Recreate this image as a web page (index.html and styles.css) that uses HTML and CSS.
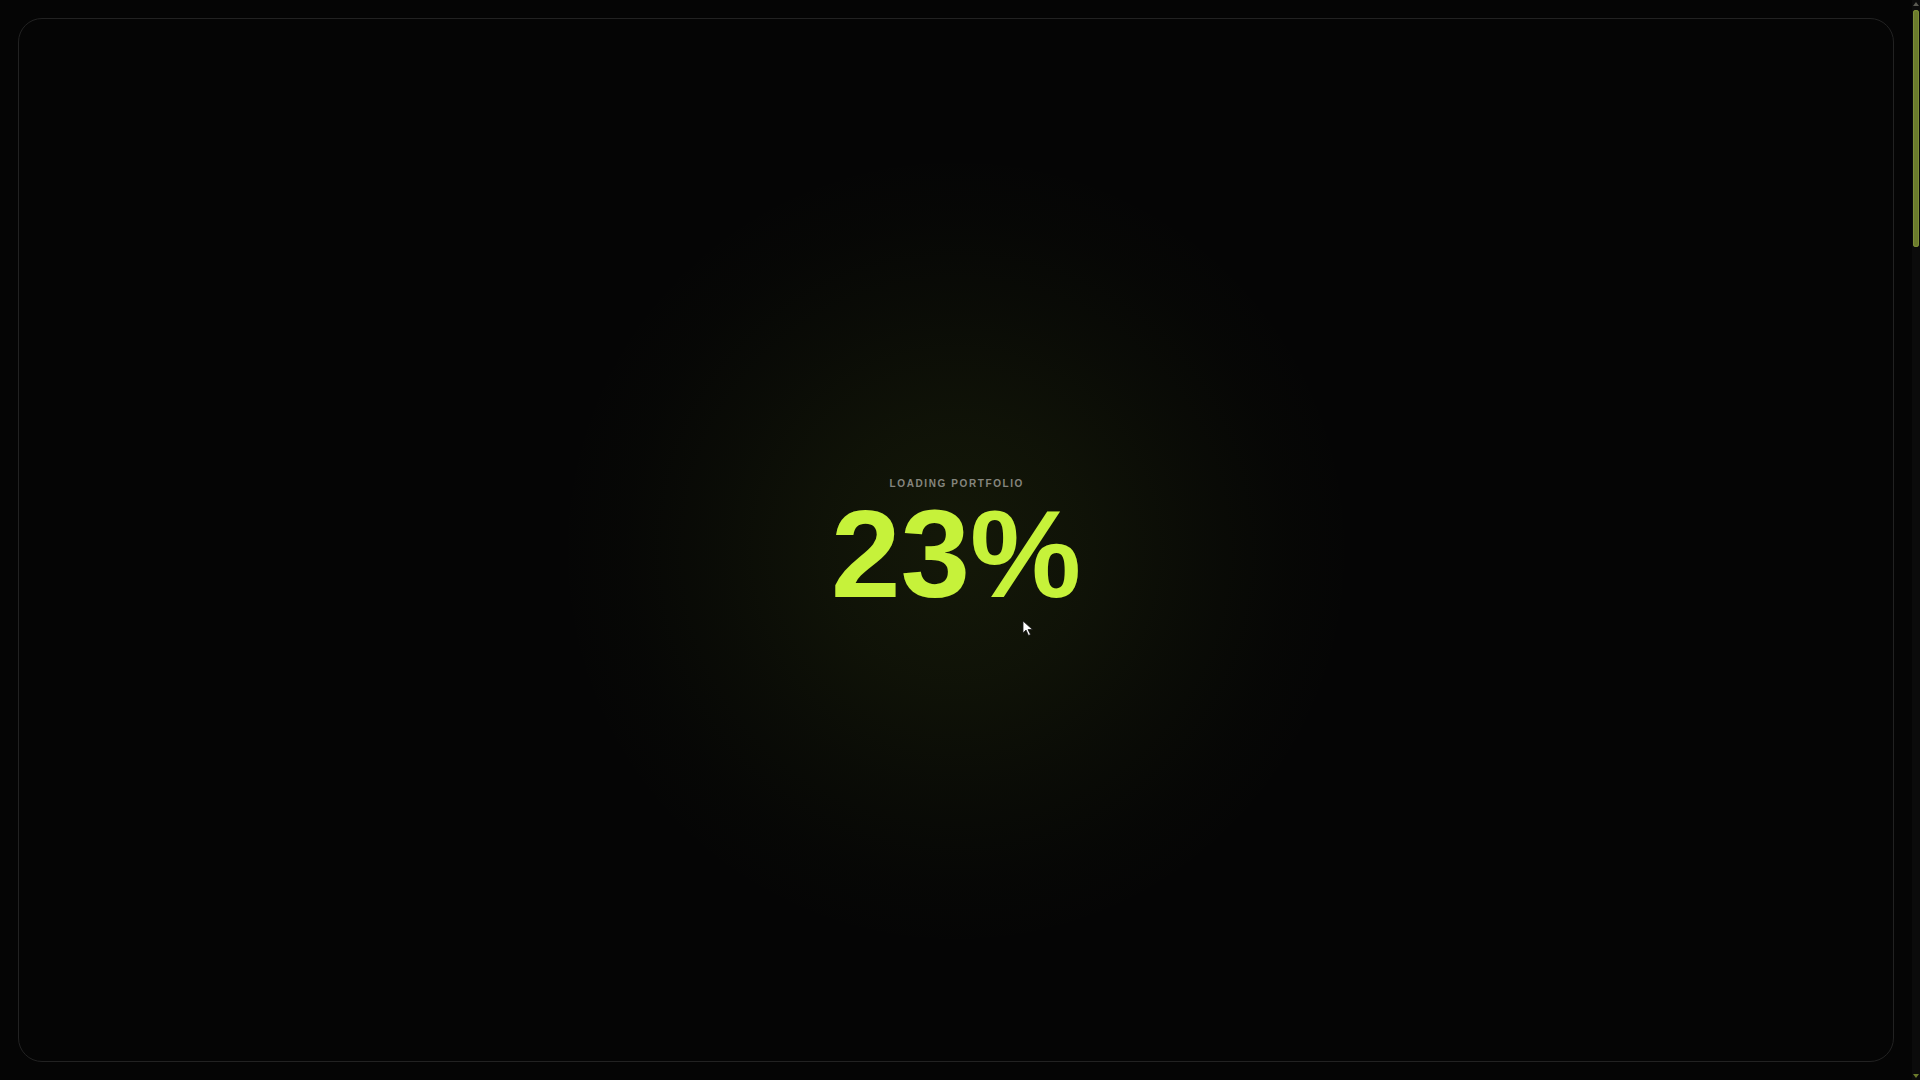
FILE: index.html
```html
<!DOCTYPE html>
<html lang="en">
<head>
<meta charset="utf-8">
<title>Loading Portfolio</title>
<link rel="stylesheet" href="styles.css">
</head>
<body>
<div class="loader">
  <div class="glow"></div>
  <div class="frame"></div>
  <div class="loader-content">
    <div class="label">LOADING PORTFOLIO</div>
    <div class="percent">23%</div>
  </div>
  <svg class="cursor" width="12" height="17" viewBox="0 0 12 17" aria-hidden="true">
    <path d="M1 1 L1 13 L4 10 L6.5 15.5 L8.5 14.5 L6 9.5 L10.5 9.5 Z" fill="#ffffff" stroke="#1a1a1a" stroke-width="0.8"/>
  </svg>
  <div class="scrollbar">
    <div class="sb-arrow sb-up"></div>
    <div class="sb-thumb"></div>
    <div class="sb-arrow sb-down"></div>
  </div>
</div>
</body>
</html>
```

FILE: styles.css
```css
html, body {
  margin: 0;
  padding: 0;
  background: #050505;
  overflow: hidden;
}

.loader {
  position: fixed;
  inset: 0;
  background: #050505;
  display: flex;
  align-items: center;
  justify-content: center;
  padding-right: 8px;
  box-sizing: border-box;
}

.glow {
  position: absolute;
  top: 0;
  left: 0;
  bottom: 0;
  right: 8px;
  background: radial-gradient(circle at 50% 51%,
    rgba(170, 215, 40, 0.09) 0,
    rgba(160, 205, 40, 0.065) 130px,
    rgba(150, 195, 40, 0.035) 240px,
    rgba(140, 185, 40, 0.012) 330px,
    rgba(0, 0, 0, 0) 400px);
}

.frame {
  position: absolute;
  top: 18px;
  left: 18px;
  bottom: 18px;
  right: 26px;
  border: 1px solid #222222;
  border-radius: 24px;
}

.loader-content {
  position: relative;
  display: flex;
  flex-direction: column;
  align-items: center;
  padding-top: 16px;
  font-family: "Liberation Sans", Arial, sans-serif;
}

.label {
  font-size: 10px;
  font-weight: 700;
  letter-spacing: 0.16em;
  margin-right: -0.16em;
  color: #85857e;
  line-height: 12px;
}

.percent {
  font-size: 125px;
  font-weight: 700;
  line-height: 128px;
  letter-spacing: 0;
  color: #c6f23a;
}

.cursor {
  position: absolute;
  left: 1022px;
  top: 620px;
}

.scrollbar {
  position: absolute;
  top: 0;
  right: 0;
  bottom: 0;
  width: 8px;
  background: #0b0b0b;
  display: flex;
  flex-direction: column;
  align-items: center;
}

.sb-arrow {
  width: 0;
  height: 0;
  border-left: 3px solid transparent;
  border-right: 3px solid transparent;
}

.sb-up {
  margin-top: 2px;
  border-bottom: 4px solid #5a5a52;
}

.sb-thumb {
  width: 6px;
  height: 237px;
  margin-top: 4px;
  background: #6b7b2c;
  border-radius: 3px;
  box-shadow: inset 0 0 0 1px #7d8e36;
}

.sb-down {
  margin-top: auto;
  margin-bottom: 2px;
  border-top: 4px solid #6b7b2c;
}
```
